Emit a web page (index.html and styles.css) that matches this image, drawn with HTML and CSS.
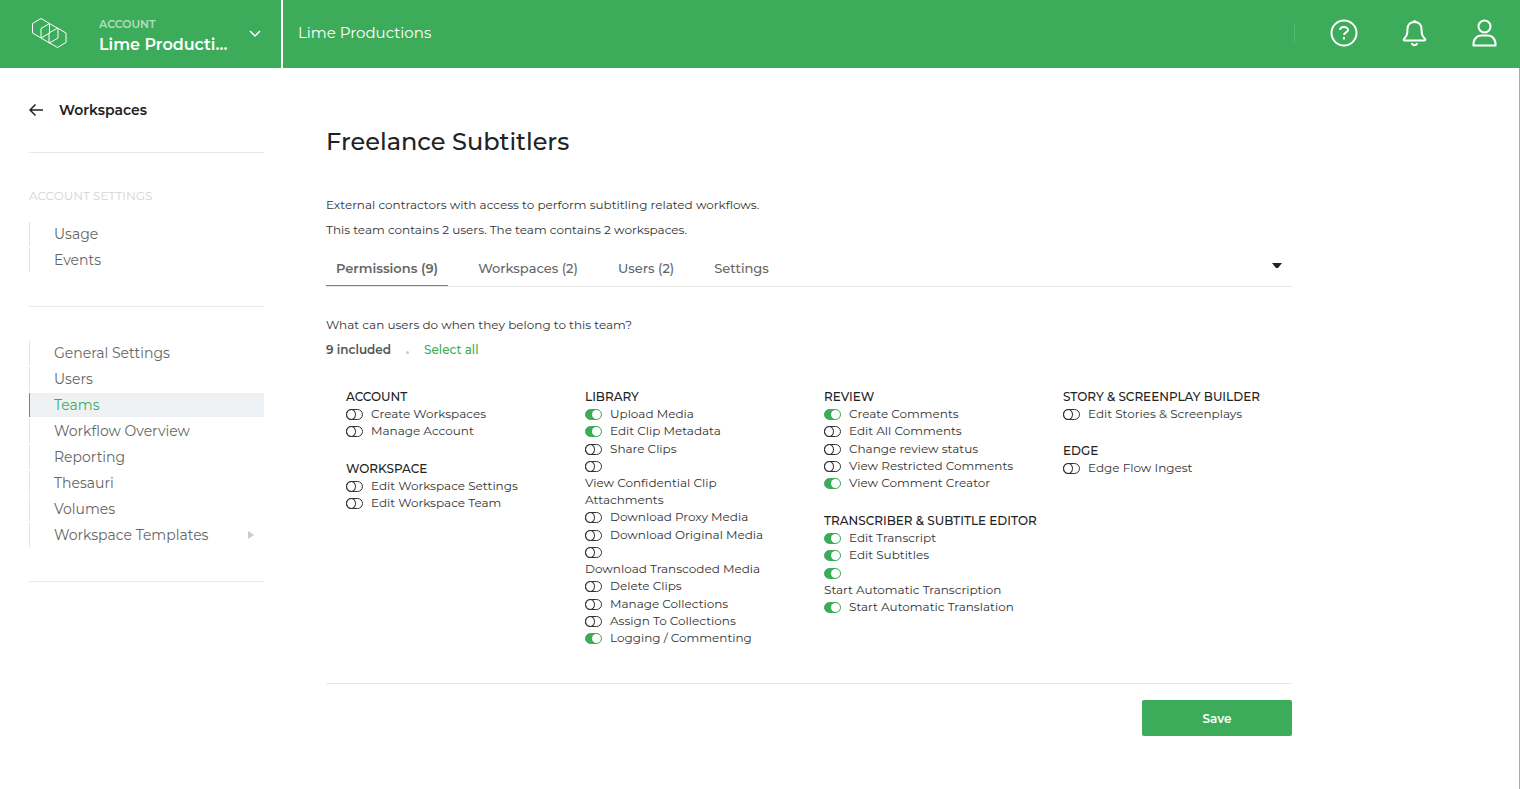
FILE: index.html
```html
<!doctype html>
<html lang="en">
<head>
<meta charset="utf-8">
<title>Freelance Subtitlers</title>
<link rel="stylesheet" href="styles.css">
</head>

<body>
<header class="topbar">
    <button type="button" class="account">
        <svg class="logo" width="36" height="34" viewBox="0 0 36 34">
            <path d="M10 1.500l8.500 5v9.500l-8.500 5l-8.500-5v-9.500z"/>
            <path d="M18.500 6.500l8.500 5v9.500l-8.500 5l-8.500-5v-9.500z"/>
            <path d="M26.500 11l8.500 5v9.500l-8.500 5l-8.500-5v-9.500z"/>
        </svg>
        <span class="account-text">
            <span class="account-label">ACCOUNT</span>
            <span class="account-name">Lime Productions</span>
        </span>
        <svg class="chevron" width="12" height="8" viewBox="0 0 12 8"><path d="M1 1l5 5l5-5"/></svg>
    </button>
    <div class="crumb">Lime Productions</div>
    <div class="tools">
        <button type="button" aria-label="Help">
            <svg width="28" height="28" viewBox="0 0 28 28">
                <circle cx="14" cy="14" r="12.500"/>
                <path d="M10 11c.2-3.800 8-4 8 0c0 2.500-4 2.300-4 5M14 18v2.400"/>
            </svg>
        </button>
        <button type="button" aria-label="Notifications">
            <svg width="28" height="28" viewBox="0 0 28 28">
                <path d="M14.500 1v2M14.500 3c-4.500 0-7 3-7 7c0 6-1 7-3.500 10c-.6.900-.2 1.500.7 1.500h19.600c.9 0 1.300-.6.700-1.500c-2.500-3-3.500-4-3.500-10c0-4-2.500-7-7-7zM12 24c.3 3 4.700 3 5 0"/>
            </svg>
        </button>
        <button type="button" aria-label="Profile">
            <svg width="28" height="28" viewBox="0 0 28 28">
                <circle cx="14.500" cy="7.500" r="6"/>
                <path d="M3.500 26.500c-.5-6 3-10 8-10h6c5 0 8.500 4 8 10z"/>
            </svg>
        </button>
    </div>
</header>

<div class="layout">
    <nav class="sidebar">
        <a class="back" href="#">
            <svg width="14" height="14" viewBox="0 0 14 14"><path d="M14 6h-13M6.500 .500l-5.500 5.500l5.500 5.500"/></svg>
            Workspaces
        </a>
        <section class="side-group">
            <h2>ACCOUNT SETTINGS</h2>
            <a href="#">Usage</a>
            <a href="#">Events</a>
        </section>
        <section class="side-group">
            <a href="#">General Settings</a>
            <a href="#">Users</a>
            <a class="active" href="#">Teams</a>
            <a href="#">Workflow Overview</a>
            <a href="#">Reporting</a>
            <a href="#">Thesauri</a>
            <a href="#">Volumes</a>
            <a class="has-sub" href="#">Workspace Templates</a>
        </section>
    </nav>

    <main class="content">
        <h1>Freelance Subtitlers</h1>
        <p>External contractors with access to perform subtitling related workflows.</p>
        <p>This team contains 2 users. The team contains 2 workspaces.</p>

        <div class="tabs">
            <button type="button" class="tab active">Permissions (9)</button>
            <button type="button" class="tab">Workspaces (2)</button>
            <button type="button" class="tab">Users (2)</button>
            <button type="button" class="tab">Settings</button>
            <button type="button" class="more" aria-label="More"></button>
        </div>

        <p>What can users do when they belong to this team?</p>
        <div class="summary">
            <strong>9 included</strong>
            <span class="dot"></span>
            <button type="button" class="link">Select all</button>
        </div>

        <form>
            <div class="permissions">
                <div class="column">
                    <fieldset>
                        <legend>ACCOUNT</legend>
                        <label><input type="checkbox"><span>Create Workspaces</span></label>
                        <label><input type="checkbox"><span>Manage Account</span></label>
                    </fieldset>
                    <fieldset>
                        <legend>WORKSPACE</legend>
                        <label><input type="checkbox"><span>Edit Workspace Settings</span></label>
                        <label><input type="checkbox"><span>Edit Workspace Team</span></label>
                    </fieldset>
                </div>
                <div class="column">
                    <fieldset>
                        <legend>LIBRARY</legend>
                        <label><input type="checkbox" checked><span>Upload Media</span></label>
                        <label><input type="checkbox" checked><span>Edit Clip Metadata</span></label>
                        <label><input type="checkbox"><span>Share Clips</span></label>
                        <label><input type="checkbox"><span>View Confidential Clip Attachments</span></label>
                        <label><input type="checkbox"><span>Download Proxy Media</span></label>
                        <label><input type="checkbox"><span>Download Original Media</span></label>
                        <label><input type="checkbox"><span>Download Transcoded Media</span></label>
                        <label><input type="checkbox"><span>Delete Clips</span></label>
                        <label><input type="checkbox"><span>Manage Collections</span></label>
                        <label><input type="checkbox"><span>Assign To Collections</span></label>
                        <label><input type="checkbox" checked><span>Logging / Commenting</span></label>
                    </fieldset>
                </div>
                <div class="column">
                    <fieldset>
                        <legend>REVIEW</legend>
                        <label><input type="checkbox" checked><span>Create Comments</span></label>
                        <label><input type="checkbox"><span>Edit All Comments</span></label>
                        <label><input type="checkbox"><span>Change review status</span></label>
                        <label><input type="checkbox"><span>View Restricted Comments</span></label>
                        <label><input type="checkbox" checked><span>View Comment Creator</span></label>
                    </fieldset>
                    <fieldset>
                        <legend>TRANSCRIBER &amp; SUBTITLE EDITOR</legend>
                        <label><input type="checkbox" checked><span>Edit Transcript</span></label>
                        <label><input type="checkbox" checked><span>Edit Subtitles</span></label>
                        <label><input type="checkbox" checked><span>Start Automatic Transcription</span></label>
                        <label><input type="checkbox" checked><span>Start Automatic Translation</span></label>
                    </fieldset>
                </div>
                <div class="column">
                    <fieldset>
                        <legend>STORY &amp; SCREENPLAY BUILDER</legend>
                        <label><input type="checkbox"><span>Edit Stories &amp; Screenplays</span></label>
                    </fieldset>
                    <fieldset>
                        <legend>EDGE</legend>
                        <label><input type="checkbox"><span>Edge Flow Ingest</span></label>
                    </fieldset>
                </div>
            </div>
            <div class="actions">
                <button type="button" class="save">Save</button>
            </div>
        </form>
    </main>
</div>
</body>
</html>
```
FILE: styles.css
```css
* {
    box-sizing: border-box;
}
body {
    margin: 0;
    font: 12px/25px Montserrat, Inter, sans-serif;
    color: #333;
    background: #fff;
}
button {
    padding: 0;
    border: none;
    background: none;
    font: inherit;
    color: inherit;
    cursor: pointer;
}
a {
    color: inherit;
    text-decoration: none;
}
svg {
    display: block;
    flex: none;
    fill: none;
    stroke: currentColor;
}

/* top bar */
.topbar {
    display: flex;
    height: 68px;
    background: #3dac5a;
    color: #fff;
}
.account {
    display: flex;
    align-items: center;
    width: 283px;
    padding: 0 22px 0 31px;
    border-right: 2px solid #fff;
    text-align: left;
}
.account-text {
    width: 130px;
    margin: 0 20px 0 32px;
    padding-top: 2px;
}
.account-label,
.account-name {
    display: block;
    font-weight: 600;
    line-height: 20px;
}
.account-label {
    font-size: 11px;
    color: #b1dfbf;
}
.account-name {
    overflow: hidden;
    font-size: 16px;
    line-height: 22px;
    text-overflow: ellipsis;
    white-space: nowrap;
}
.chevron {
    stroke-width: 1.5;
}
.crumb {
    padding-left: 15px;
    font-size: 15px;
    line-height: 66px;
}
.tools {
    display: flex;
    align-items: center;
    gap: 42px;
    height: 18px;
    margin: 24px 0 0 auto;
    padding: 0 22px 0 35px;
    border-left: 1px solid #55b770;
}
.tools svg {
    stroke-width: 2;
}

/* left menu */
.layout {
    display: flex;
    min-height: calc(100vh - 68px);
    border-right: 1px solid #aaa;
}
.sidebar {
    flex: none;
    width: 264px;
    padding: 30px 0 0 29px;
}
.back {
    display: flex;
    align-items: center;
    gap: 16px;
    padding-bottom: 29px;
    font-size: 14px;
    font-weight: 600;
    color: #222;
}
.back svg {
    stroke-width: 1.5;
}
.side-group {
    padding: 34px 0;
    border-top: 1px solid #e8e8e8;
}
.side-group:last-child {
    border-bottom: 1px solid #e8e8e8;
}
.side-group h2 {
    margin: 0 0 17px;
    font-size: 12px;
    font-weight: 400;
    line-height: 18px;
    color: #d4d4d4;
}
.side-group a {
    display: flex;
    align-items: center;
    height: 24px;
    margin-bottom: 2px;
    padding-left: 24px;
    border-left: 1px solid #e3e3e3;
    font-size: 14px;
    line-height: 24px;
    color: #666;
}
.side-group a:last-child {
    margin-bottom: 0;
}
.side-group .active {
    border-left-color: #3dac5a;
    background: #eef2f5;
    color: #3dac5a;
}
.has-sub::after {
    content: "";
    margin: 0 10px 0 auto;
    border: 4px solid transparent;
    border-left: 6px solid #ccc;
    border-right: 0;
}

/* team page */
.content {
    flex: 1;
    max-width: 966px;
    margin: 57px 0 50px 62px;
}
h1 {
    margin: 0 0 33px;
    font-size: 24px;
    font-weight: 500;
    line-height: 34px;
    color: #222;
}
p {
    margin: 0;
}
.tabs {
    display: flex;
    gap: 20px;
    margin: 9px 0 25px;
    border-bottom: 1px solid #e6e6e6;
    font-size: 13px;
    color: #666;
}
.tab {
    height: 35px;
    padding: 0 10px;
    border-bottom: 1px solid transparent;
    font-weight: 500;
}
.tab.active {
    border-bottom-color: #3dac5a;
    font-weight: 600;
}
.more {
    width: 10px;
    margin: 0 10px 6px auto;
}
.more::before {
    content: "";
    display: block;
    border: 4px solid transparent;
    border-top: 5px solid #222;
    border-bottom: 0;
}
.summary {
    display: flex;
    align-items: center;
}
.summary strong {
    font-weight: 600;
    color: #555;
}
.dot {
    width: 3px;
    height: 3px;
    margin: 6px 15px 0;
    border-radius: 50%;
    background: #ccc;
}
.link {
    font-weight: 500;
    color: #3dac5a;
}

.permissions {
    display: grid;
    grid-template-columns: repeat(4, minmax(0, 1fr));
    padding: 26px 10px 16px 0;
    border-bottom: 1px solid #e6e6e6;
}
.column {
    padding: 0 20px;
    line-height: 17px;
}
fieldset {
    min-width: 0;
    margin: 0 0 20px;
    padding: 0;
    border: none;
}
legend {
    padding: 0;
    white-space: nowrap;
    font-weight: 500;
    color: #222;
}
label {
    display: block;
}
label:nth-child(3n) {
    padding-bottom: 1px;
}
label span {
    display: inline-block;
    vertical-align: top;
}
label input {
    appearance: none;
    width: 17px;
    height: 11px;
    margin: 4px 8px 2px 0;
    border: 1px solid #333;
    border-radius: 6px;
    vertical-align: top;
}
label input::before {
    content: "";
    display: block;
    width: 8px;
    height: 9px;
    margin: -1px;
    border: 1px solid #333;
    border-radius: 50%;
}
label input:checked {
    border-color: #3dac5a;
    background: #3dac5a;
}
label input:checked::before {
    width: 9px;
    margin: 0 0 0 6px;
    border: none;
    background: #fff;
}
.actions {
    display: flex;
    justify-content: flex-end;
    padding-top: 16px;
}
.save {
    width: 150px;
    height: 36px;
    border-radius: 2px;
    background: #3dac5a;
    font-weight: 600;
    color: #fff;
}
```
